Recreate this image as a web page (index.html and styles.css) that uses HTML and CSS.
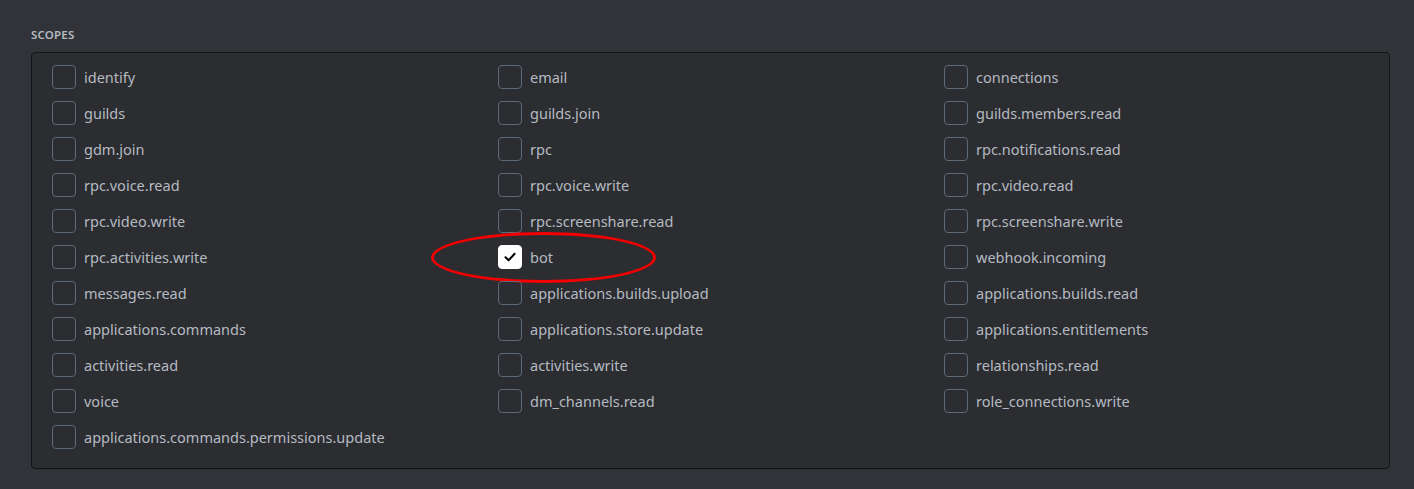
FILE: index.html
```html
<!DOCTYPE html>
<html>
<head>
<meta charset="utf-8">
<link rel="stylesheet" href="styles.css">
</head>
<body>
<div class="page">
  <h2 class="title">Scopes</h2>
  <div class="panel">
    <div class="grid">
      <label class="item"><span class="box"></span><span class="text">identify</span></label>
      <label class="item"><span class="box"></span><span class="text">email</span></label>
      <label class="item"><span class="box"></span><span class="text">connections</span></label>
      <label class="item"><span class="box"></span><span class="text">guilds</span></label>
      <label class="item"><span class="box"></span><span class="text">guilds.join</span></label>
      <label class="item"><span class="box"></span><span class="text">guilds.members.read</span></label>
      <label class="item"><span class="box"></span><span class="text">gdm.join</span></label>
      <label class="item"><span class="box"></span><span class="text">rpc</span></label>
      <label class="item"><span class="box"></span><span class="text">rpc.notifications.read</span></label>
      <label class="item"><span class="box"></span><span class="text">rpc.voice.read</span></label>
      <label class="item"><span class="box"></span><span class="text">rpc.voice.write</span></label>
      <label class="item"><span class="box"></span><span class="text">rpc.video.read</span></label>
      <label class="item"><span class="box"></span><span class="text">rpc.video.write</span></label>
      <label class="item"><span class="box"></span><span class="text">rpc.screenshare.read</span></label>
      <label class="item"><span class="box"></span><span class="text">rpc.screenshare.write</span></label>
      <label class="item"><span class="box"></span><span class="text">rpc.activities.write</span></label>
      <label class="item highlighted"><span class="box checked"><svg width="14" height="14" viewBox="0 0 14 14"><path d="M2.5 7.2 L5.6 10.2 L11.6 3.8" fill="none" stroke="#000" stroke-width="2" stroke-linecap="round" stroke-linejoin="round"/></svg></span><span class="text">bot</span><span class="ring"></span></label>
      <label class="item"><span class="box"></span><span class="text">webhook.incoming</span></label>
      <label class="item"><span class="box"></span><span class="text">messages.read</span></label>
      <label class="item"><span class="box"></span><span class="text">applications.builds.upload</span></label>
      <label class="item"><span class="box"></span><span class="text">applications.builds.read</span></label>
      <label class="item"><span class="box"></span><span class="text">applications.commands</span></label>
      <label class="item"><span class="box"></span><span class="text">applications.store.update</span></label>
      <label class="item"><span class="box"></span><span class="text">applications.entitlements</span></label>
      <label class="item"><span class="box"></span><span class="text">activities.read</span></label>
      <label class="item"><span class="box"></span><span class="text">activities.write</span></label>
      <label class="item"><span class="box"></span><span class="text">relationships.read</span></label>
      <label class="item"><span class="box"></span><span class="text">voice</span></label>
      <label class="item"><span class="box"></span><span class="text">dm_channels.read</span></label>
      <label class="item"><span class="box"></span><span class="text">role_connections.write</span></label>
      <label class="item"><span class="box"></span><span class="text">applications.commands.permissions.update</span></label>
    </div>
  </div>
</div>
</body>
</html>
```
FILE: styles.css
```css
html, body {
  margin: 0;
  padding: 0;
  background: #313338;
}
body {
  font-family: "Noto Sans", "Open Sans", sans-serif;
  width: 1414px;
  height: 489px;
  overflow: hidden;
}
.page {
  padding: 28px 23px 0 31px;
}
.title {
  margin: 0 0 10px 0;
  font-size: 11.5px;
  font-weight: 600;
  text-transform: uppercase;
  color: #b5bac1;
  letter-spacing: 0.2px;
  line-height: 14px;
}
.panel {
  width: 1357px;
  height: 415px;
  box-sizing: content-box;
  border: 1px solid #131416;
  border-radius: 4px;
  background: #2b2d31;
}
.grid {
  display: grid;
  grid-template-columns: 446px 446px 446px;
  row-gap: 12px;
  padding: 12px 0 0 20px;
}
.item {
  position: relative;
  display: flex;
  align-items: center;
  gap: 8px;
  height: 24px;
}
.box {
  box-sizing: border-box;
  width: 24px;
  height: 24px;
  flex: none;
  border: 1px solid #5d6a77;
  border-radius: 4px;
  display: flex;
  align-items: center;
  justify-content: center;
}
.box.checked {
  background: #ffffff;
  border-color: #ffffff;
}
.text {
  font-size: 14.5px;
  color: #b5bac1;
  line-height: 20px;
}
.ring {
  position: absolute;
  left: -67px;
  top: -13px;
  width: 225px;
  height: 51px;
  box-sizing: border-box;
  border: 3px solid #f40000;
  border-radius: 50%;
  pointer-events: none;
}
```
